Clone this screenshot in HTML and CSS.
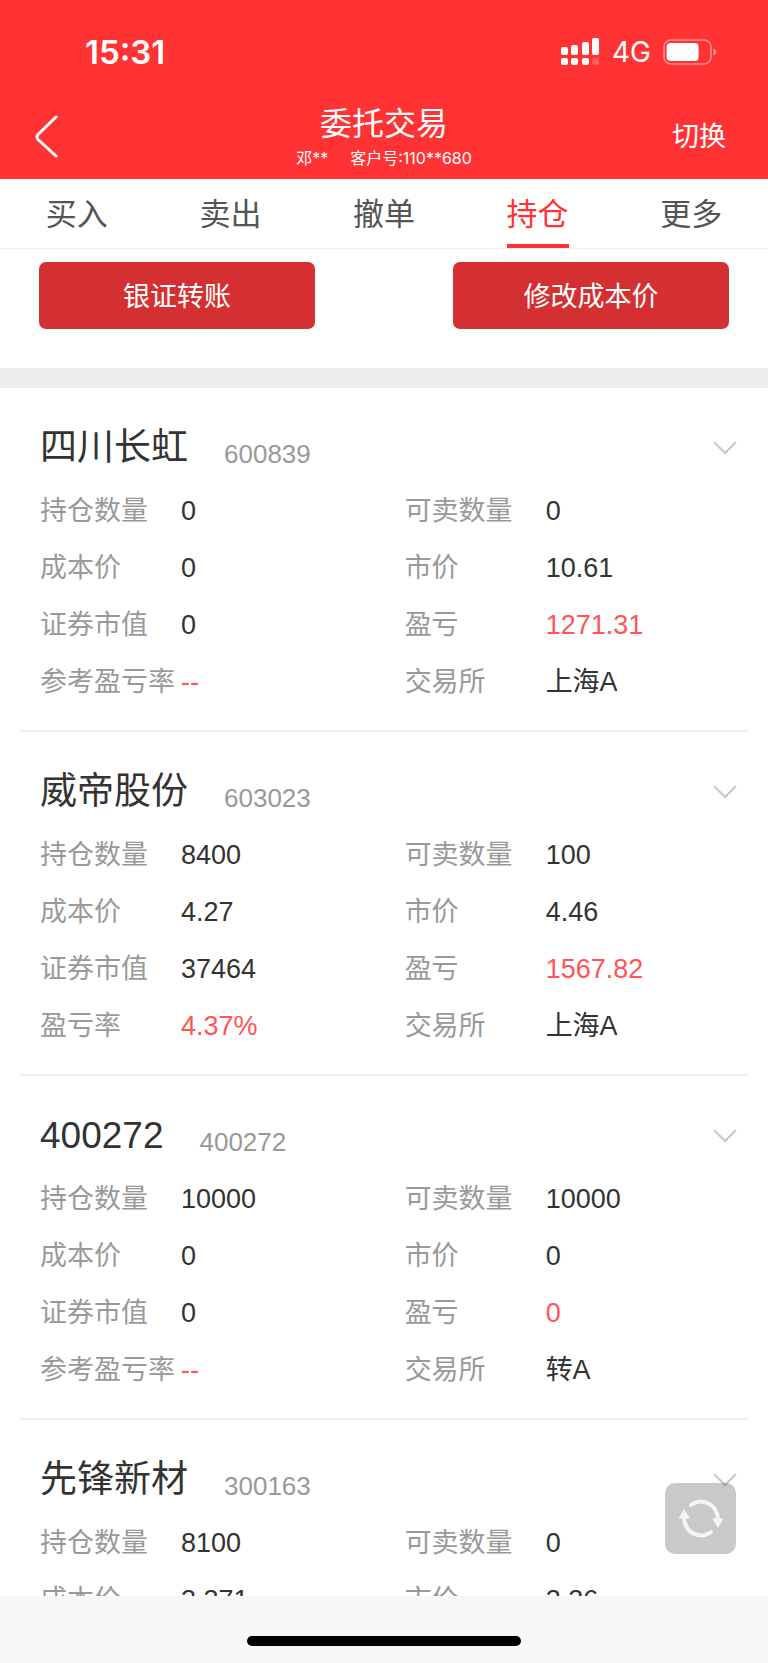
FILE: index.html
```html
<!DOCTYPE html>
<html lang="zh-CN">
<head>
<meta charset="utf-8">
<meta name="viewport" content="width=device-width, initial-scale=1">
<title>委托交易</title>
<link rel="stylesheet" href="styles.css">
</head>
<body>
<div class="app">
  <header class="header">
    <div class="status">
      <span class="time">15:31</span>
      <div class="status-right">
        <svg class="signal" width="40" height="28" viewBox="0 0 40 28" fill="#fff" aria-hidden="true">
          <rect x="1" y="9" width="7" height="8" rx="2"/><rect x="11" y="7" width="7" height="10" rx="2"/><rect x="22" y="4" width="7" height="13" rx="2"/><rect x="32" y="0" width="7" height="17" rx="2"/>
          <rect x="1" y="20" width="7" height="7" rx="2"/><rect x="11" y="20" width="7" height="7" rx="2"/><rect x="22" y="20" width="7" height="7" rx="2"/><rect x="32" y="20" width="7" height="7" rx="2" opacity=".2"/>
        </svg>
        <span class="network">4G</span>
        <svg class="battery" width="54" height="26" viewBox="0 0 54 26" aria-hidden="true">
          <rect x="1" y="1" width="47" height="24" rx="7" fill="none" stroke="#fff" stroke-opacity=".45" stroke-width="1.6"/>
          <rect x="3.6" y="4" width="32" height="18" rx="4" fill="#fff"/>
          <path d="M50.5 9.5Q53.3 11 53.3 13T50.5 16.500Z" fill="#fff" opacity=".5"/>
        </svg>
      </div>
    </div>
    <div class="navbar">
      <button class="back" type="button" aria-label="返回">
        <svg width="24" height="44" viewBox="0 0 24 44" fill="none" stroke="#fff" stroke-width="3" stroke-linecap="round" stroke-linejoin="round"><path d="M21 2L3 19.500Q1 22 3 24.500L21 41"/></svg>
      </button>
      <div class="heading">
        <h1 class="title">委托交易</h1>
        <p class="account"><span>邓**</span><span>客户号:110**680</span></p>
      </div>
      <button class="switch" type="button">切换</button>
    </div>
  </header>
  <nav class="tabs">
    <a class="tab" href="#buy">买入</a>
    <a class="tab" href="#sell">卖出</a>
    <a class="tab" href="#cancel">撤单</a>
    <a class="tab tab-active" href="#positions" aria-current="page">持仓</a>
    <a class="tab" href="#more">更多</a>
  </nav>
  <main class="content">
    <div class="actions">
      <button class="action" type="button">银证转账</button>
      <button class="action" type="button">修改成本价</button>
    </div>
    <section class="card">
      <div class="card-head"><h2 class="name">四川长虹</h2><span class="code">600839</span>
        <svg class="chevron" width="24" height="14" viewBox="0 0 24 14"><path d="M1 1L12 12L23 1"/></svg></div>
      <dl class="fields">
        <div class="field"><dt>持仓数量</dt><dd>0</dd></div><div class="field"><dt>可卖数量</dt><dd>0</dd></div>
        <div class="field"><dt>成本价</dt><dd>0</dd></div><div class="field"><dt>市价</dt><dd>10.61</dd></div>
        <div class="field"><dt>证券市值</dt><dd>0</dd></div><div class="field"><dt>盈亏</dt><dd class="up">1271.31</dd></div>
        <div class="field"><dt>参考盈亏率</dt><dd class="up">--</dd></div><div class="field"><dt>交易所</dt><dd>上海A</dd></div>
      </dl>
    </section>
    <section class="card">
      <div class="card-head"><h2 class="name">威帝股份</h2><span class="code">603023</span>
        <svg class="chevron" width="24" height="14" viewBox="0 0 24 14"><path d="M1 1L12 12L23 1"/></svg></div>
      <dl class="fields">
        <div class="field"><dt>持仓数量</dt><dd>8400</dd></div><div class="field"><dt>可卖数量</dt><dd>100</dd></div>
        <div class="field"><dt>成本价</dt><dd>4.27</dd></div><div class="field"><dt>市价</dt><dd>4.46</dd></div>
        <div class="field"><dt>证券市值</dt><dd>37464</dd></div><div class="field"><dt>盈亏</dt><dd class="up">1567.82</dd></div>
        <div class="field"><dt>盈亏率</dt><dd class="up">4.37%</dd></div><div class="field"><dt>交易所</dt><dd>上海A</dd></div>
      </dl>
    </section>
    <section class="card">
      <div class="card-head"><h2 class="name">400272</h2><span class="code">400272</span>
        <svg class="chevron" width="24" height="14" viewBox="0 0 24 14"><path d="M1 1L12 12L23 1"/></svg></div>
      <dl class="fields">
        <div class="field"><dt>持仓数量</dt><dd>10000</dd></div><div class="field"><dt>可卖数量</dt><dd>10000</dd></div>
        <div class="field"><dt>成本价</dt><dd>0</dd></div><div class="field"><dt>市价</dt><dd>0</dd></div>
        <div class="field"><dt>证券市值</dt><dd>0</dd></div><div class="field"><dt>盈亏</dt><dd class="up">0</dd></div>
        <div class="field"><dt>参考盈亏率</dt><dd class="up">--</dd></div><div class="field"><dt>交易所</dt><dd>转A</dd></div>
      </dl>
    </section>
    <section class="card">
      <div class="card-head"><h2 class="name">先锋新材</h2><span class="code">300163</span>
        <svg class="chevron" width="24" height="14" viewBox="0 0 24 14"><path d="M1 1L12 12L23 1"/></svg></div>
      <dl class="fields">
        <div class="field"><dt>持仓数量</dt><dd>8100</dd></div><div class="field"><dt>可卖数量</dt><dd>0</dd></div>
        <div class="field"><dt>成本价</dt><dd>3.371</dd></div><div class="field"><dt>市价</dt><dd>3.36</dd></div>
      </dl>
    </section>
  </main>
  <footer class="home"><div class="home-bar"></div></footer>
  <button class="refresh" type="button" aria-label="刷新">
    <svg width="46" height="42" viewBox="0 0 46 42" fill="none" stroke="#f5f5f5" stroke-width="4" stroke-linecap="round">
      <path d="M13 7C24 -1 39 6 40 21"/><path d="M33 34C22 42 7 35 6 20"/>
      <path d="M34 20.500H45.500L40 30Z" fill="#f5f5f5" stroke="none"/><path d="M12 20.500H0.500L6 11Z" fill="#f5f5f5" stroke="none"/>
    </svg>
  </button>
</div>
</body>
</html>
```
FILE: styles.css
```css
* { box-sizing: border-box; margin: 0; padding: 0; }
body { background: #fff; color: #333; font-family: "Liberation Sans", "Noto Sans CJK SC", sans-serif; font-weight: 400; }
button { border: 0; background: none; color: inherit; font: inherit; }
h1, h2 { font-weight: 400; }
a { color: inherit; text-decoration: none; }
svg { display: block; }

.app { position: relative; display: flex; flex-direction: column; height: 100vh; overflow: hidden; }

.header { flex: none; background: #f33; color: #fff; font-family: Inter, "Noto Sans CJK SC", sans-serif; }
.status { display: flex; align-items: center; justify-content: space-between; height: 103px; padding: 0 51px 0 85px; }
.time { font-size: 33px; font-weight: 600; line-height: 40px; }
.status-right { display: flex; align-items: center; gap: 12px; }
.network { font-size: 28px; line-height: 36px; }
.navbar { display: grid; grid-template-columns: 1fr auto 1fr; align-items: center; height: 76px; padding: 0 35px 8px; }
.back { justify-self: start; }
.heading { text-align: center; }
.title { font-size: 32px; line-height: 42px; }
.account { display: flex; justify-content: center; gap: 22px; font-size: 16px; line-height: 26px; }
.switch { justify-self: end; padding-right: 7px; font-size: 27px; line-height: 40px; }

.tabs { flex: none; display: grid; grid-template-columns: repeat(5, 1fr); justify-items: center; height: 70px; border-bottom: 1px solid #eee; color: #555; font-size: 31px; line-height: 72px; }
.tab { height: 69px; border-bottom: 4px solid transparent; }
.tab-active { border-color: #f33; color: #f33; }

.content { flex: 1; min-height: 0; overflow: hidden; }
.actions { display: flex; justify-content: space-between; padding: 13px 39px 39px; border-bottom: 20px solid #eee; }
.action { width: 40%; height: 67px; padding-bottom: 2px; border-radius: 7px; background: #d53031; color: #fff; font-size: 27px; }

.card { margin: 0 20px; padding: 0 20px 19px; border-bottom: 2px solid #f0f0f0; }
.card-head { display: flex; align-items: flex-start; height: 95px; padding-top: 32px; }
.name { margin-right: 36px; font-size: 37px; line-height: 56px; }
.code { padding-top: 14px; color: #999; font-size: 26px; line-height: 40px; }
.chevron { margin: 21px -9px 0 auto; fill: none; stroke: #c8c8c8; stroke-width: 2; }
.fields { display: grid; grid-template-columns: 53% 47%; }
.field { display: flex; align-items: baseline; height: 57px; line-height: 56px; }
.field dt { width: 141px; color: #999; font-size: 27px; white-space: nowrap; }
.field dd { font-size: 27px; }
.field .up { color: #ff5556; }

.home { flex: none; display: flex; justify-content: center; height: 67px; padding-top: 40px; background: #f7f7f7; }
.home-bar { width: 274px; height: 10px; border-radius: 5px; background: #000; }
.refresh { position: absolute; right: 32px; bottom: 109px; display: flex; align-items: center; justify-content: center; width: 71px; height: 71px; border-radius: 10px; background: rgba(0, 0, 0, .21); }
```
